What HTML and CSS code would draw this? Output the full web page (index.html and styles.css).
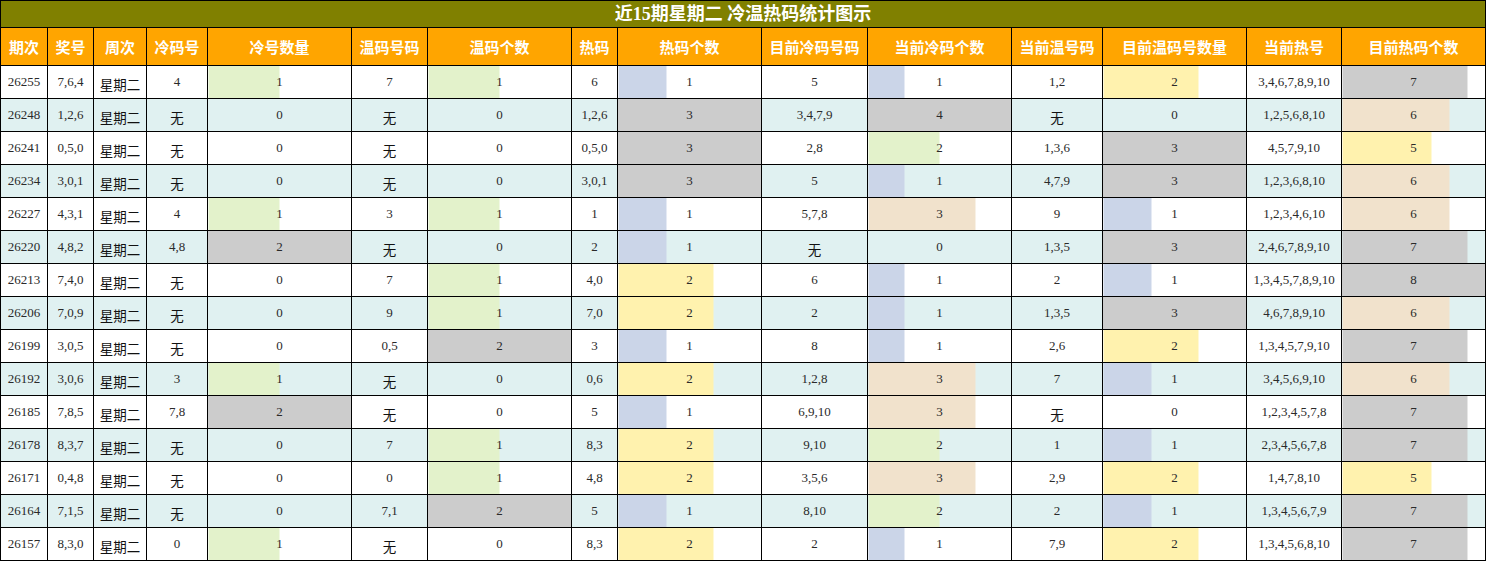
FILE: index.html
```html
<!DOCTYPE html>
<html lang="zh">
<head>
<meta charset="utf-8">
<title>近15期星期二 冷温热码统计图示</title>
<link rel="stylesheet" href="styles.css">
</head>
<body>
<table class="stats">
  <colgroup>
    <col class="w47"><col class="w46"><col class="w53"><col class="w61"><col class="w144">
    <col class="w76"><col class="w144"><col class="w46"><col class="w144"><col class="w106">
    <col class="w144"><col class="w91"><col class="w144"><col class="w95"><col class="w144">
  </colgroup>
  <thead>
    <tr class="title"><th colspan="15">近15期星期二 冷温热码统计图示</th></tr>
    <tr class="head">
      <th>期次</th><th>奖号</th><th>周次</th><th>冷码号</th><th>冷号数量</th><th>温码号码</th><th>温码个数</th><th>热码</th><th>热码个数</th><th>目前冷码号码</th><th>当前冷码个数</th><th>当前温号码</th><th>目前温码号数量</th><th>当前热号</th><th>目前热码个数</th>
    </tr>
  </thead>
  <tbody>
    <tr><td>26255</td><td>7,6,4</td><td class="cn">星期二</td><td>4</td><td class="bar green" style="--w:50%">1</td><td>7</td><td class="bar green" style="--w:50%">1</td><td>6</td><td class="bar blue" style="--w:33.3%">1</td><td>5</td><td class="bar blue" style="--w:25%">1</td><td>1,2</td><td class="bar yellow" style="--w:66.7%">2</td><td>3,4,6,7,8,9,10</td><td class="bar gray" style="--w:87.5%">7</td></tr>
    <tr class="alt"><td>26248</td><td>1,2,6</td><td class="cn">星期二</td><td class="cn">无</td><td>0</td><td class="cn">无</td><td>0</td><td>1,2,6</td><td class="bar gray" style="--w:100%">3</td><td>3,4,7,9</td><td class="bar gray" style="--w:100%">4</td><td class="cn">无</td><td>0</td><td>1,2,5,6,8,10</td><td class="bar beige" style="--w:75%">6</td></tr>
    <tr><td>26241</td><td>0,5,0</td><td class="cn">星期二</td><td class="cn">无</td><td>0</td><td class="cn">无</td><td>0</td><td>0,5,0</td><td class="bar gray" style="--w:100%">3</td><td>2,8</td><td class="bar green" style="--w:50%">2</td><td>1,3,6</td><td class="bar gray" style="--w:100%">3</td><td>4,5,7,9,10</td><td class="bar yellow" style="--w:62.5%">5</td></tr>
    <tr class="alt"><td>26234</td><td>3,0,1</td><td class="cn">星期二</td><td class="cn">无</td><td>0</td><td class="cn">无</td><td>0</td><td>3,0,1</td><td class="bar gray" style="--w:100%">3</td><td>5</td><td class="bar blue" style="--w:25%">1</td><td>4,7,9</td><td class="bar gray" style="--w:100%">3</td><td>1,2,3,6,8,10</td><td class="bar beige" style="--w:75%">6</td></tr>
    <tr><td>26227</td><td>4,3,1</td><td class="cn">星期二</td><td>4</td><td class="bar green" style="--w:50%">1</td><td>3</td><td class="bar green" style="--w:50%">1</td><td>1</td><td class="bar blue" style="--w:33.3%">1</td><td>5,7,8</td><td class="bar beige" style="--w:75%">3</td><td>9</td><td class="bar blue" style="--w:33.3%">1</td><td>1,2,3,4,6,10</td><td class="bar beige" style="--w:75%">6</td></tr>
    <tr class="alt"><td>26220</td><td>4,8,2</td><td class="cn">星期二</td><td>4,8</td><td class="bar gray" style="--w:100%">2</td><td class="cn">无</td><td>0</td><td>2</td><td class="bar blue" style="--w:33.3%">1</td><td class="cn">无</td><td>0</td><td>1,3,5</td><td class="bar gray" style="--w:100%">3</td><td>2,4,6,7,8,9,10</td><td class="bar gray" style="--w:87.5%">7</td></tr>
    <tr><td>26213</td><td>7,4,0</td><td class="cn">星期二</td><td class="cn">无</td><td>0</td><td>7</td><td class="bar green" style="--w:50%">1</td><td>4,0</td><td class="bar yellow" style="--w:66.7%">2</td><td>6</td><td class="bar blue" style="--w:25%">1</td><td>2</td><td class="bar blue" style="--w:33.3%">1</td><td>1,3,4,5,7,8,9,10</td><td class="bar gray" style="--w:100%">8</td></tr>
    <tr class="alt"><td>26206</td><td>7,0,9</td><td class="cn">星期二</td><td class="cn">无</td><td>0</td><td>9</td><td class="bar green" style="--w:50%">1</td><td>7,0</td><td class="bar yellow" style="--w:66.7%">2</td><td>2</td><td class="bar blue" style="--w:25%">1</td><td>1,3,5</td><td class="bar gray" style="--w:100%">3</td><td>4,6,7,8,9,10</td><td class="bar beige" style="--w:75%">6</td></tr>
    <tr><td>26199</td><td>3,0,5</td><td class="cn">星期二</td><td class="cn">无</td><td>0</td><td>0,5</td><td class="bar gray" style="--w:100%">2</td><td>3</td><td class="bar blue" style="--w:33.3%">1</td><td>8</td><td class="bar blue" style="--w:25%">1</td><td>2,6</td><td class="bar yellow" style="--w:66.7%">2</td><td>1,3,4,5,7,9,10</td><td class="bar gray" style="--w:87.5%">7</td></tr>
    <tr class="alt"><td>26192</td><td>3,0,6</td><td class="cn">星期二</td><td>3</td><td class="bar green" style="--w:50%">1</td><td class="cn">无</td><td>0</td><td>0,6</td><td class="bar yellow" style="--w:66.7%">2</td><td>1,2,8</td><td class="bar beige" style="--w:75%">3</td><td>7</td><td class="bar blue" style="--w:33.3%">1</td><td>3,4,5,6,9,10</td><td class="bar beige" style="--w:75%">6</td></tr>
    <tr><td>26185</td><td>7,8,5</td><td class="cn">星期二</td><td>7,8</td><td class="bar gray" style="--w:100%">2</td><td class="cn">无</td><td>0</td><td>5</td><td class="bar blue" style="--w:33.3%">1</td><td>6,9,10</td><td class="bar beige" style="--w:75%">3</td><td class="cn">无</td><td>0</td><td>1,2,3,4,5,7,8</td><td class="bar gray" style="--w:87.5%">7</td></tr>
    <tr class="alt"><td>26178</td><td>8,3,7</td><td class="cn">星期二</td><td class="cn">无</td><td>0</td><td>7</td><td class="bar green" style="--w:50%">1</td><td>8,3</td><td class="bar yellow" style="--w:66.7%">2</td><td>9,10</td><td class="bar green" style="--w:50%">2</td><td>1</td><td class="bar blue" style="--w:33.3%">1</td><td>2,3,4,5,6,7,8</td><td class="bar gray" style="--w:87.5%">7</td></tr>
    <tr><td>26171</td><td>0,4,8</td><td class="cn">星期二</td><td class="cn">无</td><td>0</td><td>0</td><td class="bar green" style="--w:50%">1</td><td>4,8</td><td class="bar yellow" style="--w:66.7%">2</td><td>3,5,6</td><td class="bar beige" style="--w:75%">3</td><td>2,9</td><td class="bar yellow" style="--w:66.7%">2</td><td>1,4,7,8,10</td><td class="bar yellow" style="--w:62.5%">5</td></tr>
    <tr class="alt"><td>26164</td><td>7,1,5</td><td class="cn">星期二</td><td class="cn">无</td><td>0</td><td>7,1</td><td class="bar gray" style="--w:100%">2</td><td>5</td><td class="bar blue" style="--w:33.3%">1</td><td>8,10</td><td class="bar green" style="--w:50%">2</td><td>2</td><td class="bar blue" style="--w:33.3%">1</td><td>1,3,4,5,6,7,9</td><td class="bar gray" style="--w:87.5%">7</td></tr>
    <tr><td>26157</td><td>8,3,0</td><td class="cn">星期二</td><td>0</td><td class="bar green" style="--w:50%">1</td><td class="cn">无</td><td>0</td><td>8,3</td><td class="bar yellow" style="--w:66.7%">2</td><td>2</td><td class="bar blue" style="--w:25%">1</td><td>7,9</td><td class="bar yellow" style="--w:66.7%">2</td><td>1,3,4,5,6,8,10</td><td class="bar gray" style="--w:87.5%">7</td></tr>
  </tbody>
</table>
</body>
</html>
```
FILE: styles.css
```css
html, body {
  margin: 0;
  padding: 0;
  background: #ffffff;
}

.stats {
  width: 1486px;
  table-layout: fixed;
  border-collapse: collapse;
  font-family: "Liberation Serif", "Noto Sans CJK SC", serif;
  color: #2a2a2a;
}

.w46 { width: 46px; }
.w47 { width: 47px; }
.w53 { width: 53px; }
.w61 { width: 61px; }
.w76 { width: 76px; }
.w91 { width: 91px; }
.w95 { width: 95px; }
.w106 { width: 106px; }
.w144 { width: 144px; }

.stats th,
.stats td {
  border: 1px solid #000;
  padding: 0;
  text-align: center;
  vertical-align: middle;
  white-space: nowrap;
  overflow: hidden;
}

.title th {
  height: 26px;
  background: #808000;
  color: #ffffff;
  font-family: "Liberation Serif", "Noto Sans CJK SC", serif;
  font-size: 18px;
  font-weight: bold;
  line-height: 26px;
}

.head th {
  height: 36px;
  padding-top: 1px;
  background: #ffa500;
  color: #ffffff;
  font-family: "Noto Sans CJK SC", sans-serif;
  font-size: 15px;
  font-weight: bold;
  line-height: 18px;
}

.stats td {
  height: 32px;
  font-size: 13px;
  line-height: 16px;
  background-color: #ffffff;
}

.stats tr.alt td {
  background-color: #e0f1f1;
}

.stats td.cn {
  height: 29px;
  padding-top: 3px;
  font-family: "Noto Sans CJK SC", sans-serif;
  font-size: 13.5px;
  line-height: 16px;
  color: #111;
}

.bar {
  --w: 0%;
  --c: transparent;
  background-image: linear-gradient(to right, var(--c) var(--w), transparent var(--w));
}

.green { --c: #e3f2cb; }
.blue { --c: #cbd5e8; }
.yellow { --c: #fff2ae; }
.gray { --c: #cccccc; }
.beige { --c: #f1e2cc; }
```
